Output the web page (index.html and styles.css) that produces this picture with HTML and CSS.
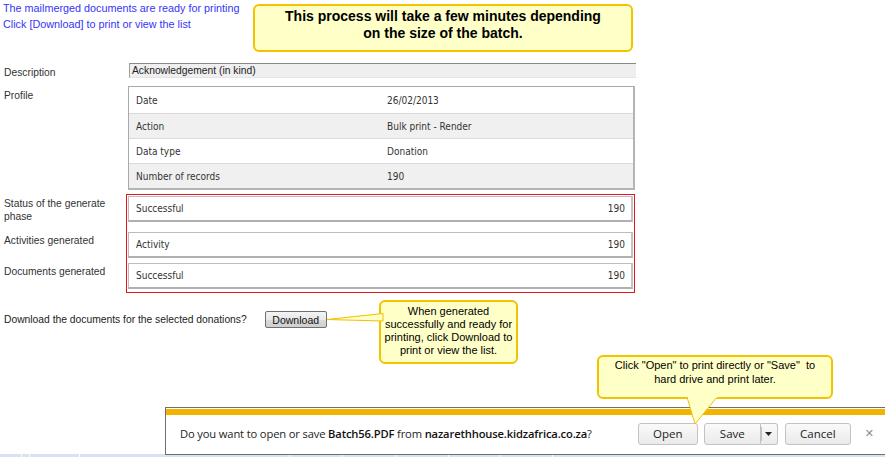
FILE: index.html
```html
<!DOCTYPE html>
<html>
<head>
<meta charset="utf-8">
<title>Mailmerge</title>
<link rel="stylesheet" href="styles.css">
</head>
<body>
<div class="page">
  <div class="intro">
    <div>The mailmerged documents are ready for printing</div>
    <div>Click [Download] to print or view the list</div>
  </div>

  <div class="row desc-row">
    <div class="label">Description</div>
    <div class="desc-input">Acknowledgement (in kind)</div>
  </div>

  <div class="row profile-row">
    <div class="label">Profile</div>
    <div class="profile">
      <div class="prow"><span class="pk">Date</span><span class="pv">26/02/2013</span></div>
      <div class="prow alt"><span class="pk">Action</span><span class="pv">Bulk print - Render</span></div>
      <div class="prow"><span class="pk">Data type</span><span class="pv">Donation</span></div>
      <div class="prow alt"><span class="pk">Number of records</span><span class="pv">190</span></div>
    </div>
  </div>

  <div class="results">
    <div class="redbox"></div>
    <div class="rlabel r1">Status of the generate<br>phase</div>
    <div class="rval r1"><span>Successful</span><span>190</span></div>
    <div class="rlabel r2">Activities generated</div>
    <div class="rval r2"><span>Activity</span><span>190</span></div>
    <div class="rlabel r3">Documents generated</div>
    <div class="rval r3"><span>Successful</span><span>190</span></div>
  </div>

  <div class="download-row">
    <span>Download the documents for the selected donations?</span>
    <button class="dl-btn">Download</button>
  </div>
</div>

<div class="taskbar">
  <span class="tb-cell w22"></span><span class="tb-cell w8"></span><span class="tb-cell w50"></span><span class="tb-cell w210"></span><span class="tb-cell w53"></span><span class="tb-cell w54"></span><span class="tb-cell w52"></span><span class="tb-cell w52"></span><span class="tb-cell w52"></span>
</div>

<div class="notify">
  <div class="notify-band"></div>
  <div class="notify-body">
    <div class="notify-text">Do you want to open or save <b>Batch56.PDF</b> from <b>nazarethhouse.kidzafrica.co.za</b>?</div>
    <div class="notify-actions">
      <button class="nbtn open">Open</button>
      <div class="split">
        <button class="nbtn save">Save</button>
        <button class="nbtn drop"><svg width="7" height="4" viewBox="0 0 7 4"><path d="M0 0H7L3.5 4Z" fill="#222"/></svg></button>
      </div>
      <button class="nbtn cancel">Cancel</button>
      <span class="close">&#x2715;</span>
    </div>
  </div>
</div>

<div class="callout c1">This process will take a few minutes depending<br>on the size of the batch.</div>

<svg class="pointer p2" width="60" height="14" viewBox="0 0 60 14"><polygon points="1,7.5 57,1.5 57,9" fill="#ffffc8" stroke="#f0c000" stroke-width="1"/></svg>
<div class="callout c2">When generated<br>successfully and ready for<br>printing, click Download to<br>print or view the list.</div>

<svg class="pointer p3" width="34" height="30" viewBox="0 0 34 30"><polygon points="1,0 31,0 9,27" fill="#ffffc8" stroke="#f0c000" stroke-width="1"/></svg>
<div class="callout c3">Click "Open" to print directly or "Save"&nbsp; to<br>hard drive and print later.</div>
<div class="p3-cover"></div>
</body>
</html>
```

FILE: styles.css
```css
html, body {
  margin: 0;
  padding: 0;
  background: #fff;
}
body {
  width: 885px;
  height: 457px;
  position: relative;
  overflow: hidden;
  font-family: "Liberation Sans", Arial, sans-serif;
  font-size: 10.3px;
  color: #333;
}
.page {
  padding-left: 4px;
}
.intro {
  margin-left: -1px;
  color: #3535f5;
  font-size: 10.8px;
  line-height: 16px;
}
.row {
  display: flex;
}
.label {
  width: 124px;
  flex: none;
  line-height: 15px;
  padding-top: 2px;
}
.desc-row {
  margin-top: 31px;
}
.desc-input {
  box-sizing: border-box;
  margin-left: 1px;
  width: 507px;
  height: 15px;
  background: #efefef;
  border-top: 1px solid #8a8a8a;
  border-left: 1px solid #a0a0a0;
  border-bottom: 1px solid #e4e4e4;
  padding-left: 2px;
  line-height: 13px;
  color: #222;
}
.profile-row {
  margin-top: 6px;
}
.profile {
  width: 504px;
  border-top: 1px solid #a9a9a9;
  border-left: 1px solid #a9a9a9;
  border-right: 2px solid #b4b4b4;
  border-bottom: 2px solid #b4b4b4;
  font-family: "DejaVu Sans Condensed", "DejaVu Sans", sans-serif;
  font-size: 10px;
  color: #333;
}
.prow {
  display: flex;
  height: 25px;
  box-sizing: border-box;
  align-items: center;
  background: #fff;
  border-top: 1px solid #dadada;
}
.prow:first-child {
  border-top: none;
  height: 26px;
}
.prow.alt {
  background: #f0f0f0;
}
.pk, .pv {
  width: 50%;
  padding-left: 7px;
  box-sizing: border-box;
}
.pv {
  padding-left: 6px;
}
.results {
  margin-top: 4px;
  display: grid;
  grid-template-columns: 124px 505px;
  grid-template-rows: 36px 31px 32px;
}
.redbox {
  grid-column: 2;
  grid-row: 1 / 4;
  margin: 0 -2px 0 -2px;
  border: 1px solid #e8141c;
}
.rlabel {
  grid-column: 1;
  line-height: 13px;
  padding-top: 4px;
}
.rlabel.r1 { grid-row: 1; padding-top: 3px; }
.rlabel.r2 { grid-row: 2; padding-top: 4px; }
.rlabel.r3 { grid-row: 3; padding-top: 4px; }
.rval {
  grid-column: 2;
  margin-top: 2px;
  height: 26px;
  box-sizing: border-box;
  display: flex;
  align-items: center;
  justify-content: space-between;
  padding: 0 6px 0 7px;
  background: #fff;
  border-top: 1px solid #bcbcbc;
  border-left: 1px solid #bcbcbc;
  border-right: 2px solid #c4c4c4;
  border-bottom: 2px solid #b0b0b0;
  font-family: "DejaVu Sans Condensed", "DejaVu Sans", sans-serif;
  font-size: 10px;
  color: #333;
  position: relative;
}
.rval.r1 { grid-row: 1; }
.rval.r2 { grid-row: 2; }
.rval.r3 { grid-row: 3; }
.download-row {
  margin-top: 18px;
  display: flex;
  align-items: center;
  color: #222;
}
.dl-btn {
  margin-left: 18px;
  width: 62px;
  height: 17px;
  padding: 0;
  font-family: "Liberation Sans", Arial, sans-serif;
  font-size: 10.5px;
  color: #111;
  border: 1px solid #707070;
  border-radius: 2px;
  background: linear-gradient(#f4f4f4, #e8e8e8 50%, #dadada 51%, #cfcfcf);
}

/* Callouts */
.callout {
  position: absolute;
  box-sizing: border-box;
  background: #ffffc8;
  border: 2px solid #f2c400;
  border-radius: 6px;
  text-align: center;
  color: #000;
  z-index: 5;
}
.c1 {
  left: 253px;
  top: 4px;
  width: 380px;
  height: 48px;
  font-weight: bold;
  font-size: 14px;
  line-height: 17px;
  padding-top: 2px;
}
.c2 {
  left: 379px;
  top: 300px;
  width: 139px;
  height: 64px;
  font-size: 11px;
  line-height: 13px;
  padding-top: 3px;
}
.c3 {
  left: 597px;
  top: 355px;
  width: 236px;
  height: 44px;
  font-size: 11px;
  line-height: 14px;
  padding-top: 1px;
}
.pointer {
  position: absolute;
  z-index: 6;
}
.p2 {
  left: 326px;
  top: 312px;
}
.p3 {
  left: 686px;
  top: 397px;
}
.p3-cover {
  position: absolute;
  left: 688px;
  top: 395px;
  width: 29px;
  height: 3px;
  background: #ffffc8;
  z-index: 7;
}

/* Notification bar */
.notify {
  position: absolute;
  left: 165px;
  top: 407px;
  width: 720px;
  height: 48px;
  box-sizing: border-box;
  border: 1px solid #6f6f6f;
  border-right: none;
  background: #fff;
  display: flex;
  flex-direction: column;
  z-index: 4;
  font-family: "Open Sans", "Noto Sans", sans-serif;
}
.notify-band {
  height: 6px;
  margin-top: 1px;
  background: #f2b400;
}
.notify-body {
  flex: 1;
  display: flex;
  align-items: center;
  justify-content: space-between;
  padding-left: 14px;
  padding-bottom: 2px;
}
.notify-text {
  font-size: 11.2px;
  color: #1e1e1e;
  letter-spacing: -0.15px;
}
.notify-text b {
  font-weight: 600;
  color: #111;
}
.notify-actions {
  display: flex;
  align-items: center;
}
.nbtn {
  height: 22px;
  box-sizing: border-box;
  border: 1px solid #c2c2c2;
  border-radius: 3px;
  background: linear-gradient(#fafafa, #eaeaea);
  font-family: "Open Sans", "Noto Sans", sans-serif;
  font-size: 11.5px;
  color: #222;
  padding: 0;
}
.open { width: 60px; }
.split {
  display: flex;
  margin-left: 6px;
}
.save {
  width: 57px;
  border-radius: 3px 0 0 3px;
}
.drop {
  width: 17px;
  border-left: none;
  border-radius: 0 3px 3px 0;
  display: flex;
  align-items: center;
  justify-content: center;
  position: relative;
}
.drop::before {
  content: "";
  position: absolute;
  left: 0;
  top: 3px;
  bottom: 3px;
  border-left: 1px solid #c2c2c2;
}
.cancel {
  width: 66px;
  margin-left: 7px;
}
.close {
  margin-left: 14px;
  margin-right: 11px;
  color: #8c8c8c;
  font-size: 11px;
  font-family: "DejaVu Sans", sans-serif;
}

/* Taskbar strip */
.taskbar {
  position: absolute;
  left: 0;
  top: 454px;
  width: 885px;
  height: 3px;
  background: #d6e3f3;
  display: flex;
}
.tb-cell {
  height: 3px;
  border-right: 1px solid #fff;
  box-sizing: border-box;
}
.w22 { width: 22px; }
.w8 { width: 8px; }
.w50 { width: 50px; }
.w210 { width: 210px; }
.w53 { width: 53px; }
.w54 { width: 54px; }
.w52 { width: 52px; }
```
